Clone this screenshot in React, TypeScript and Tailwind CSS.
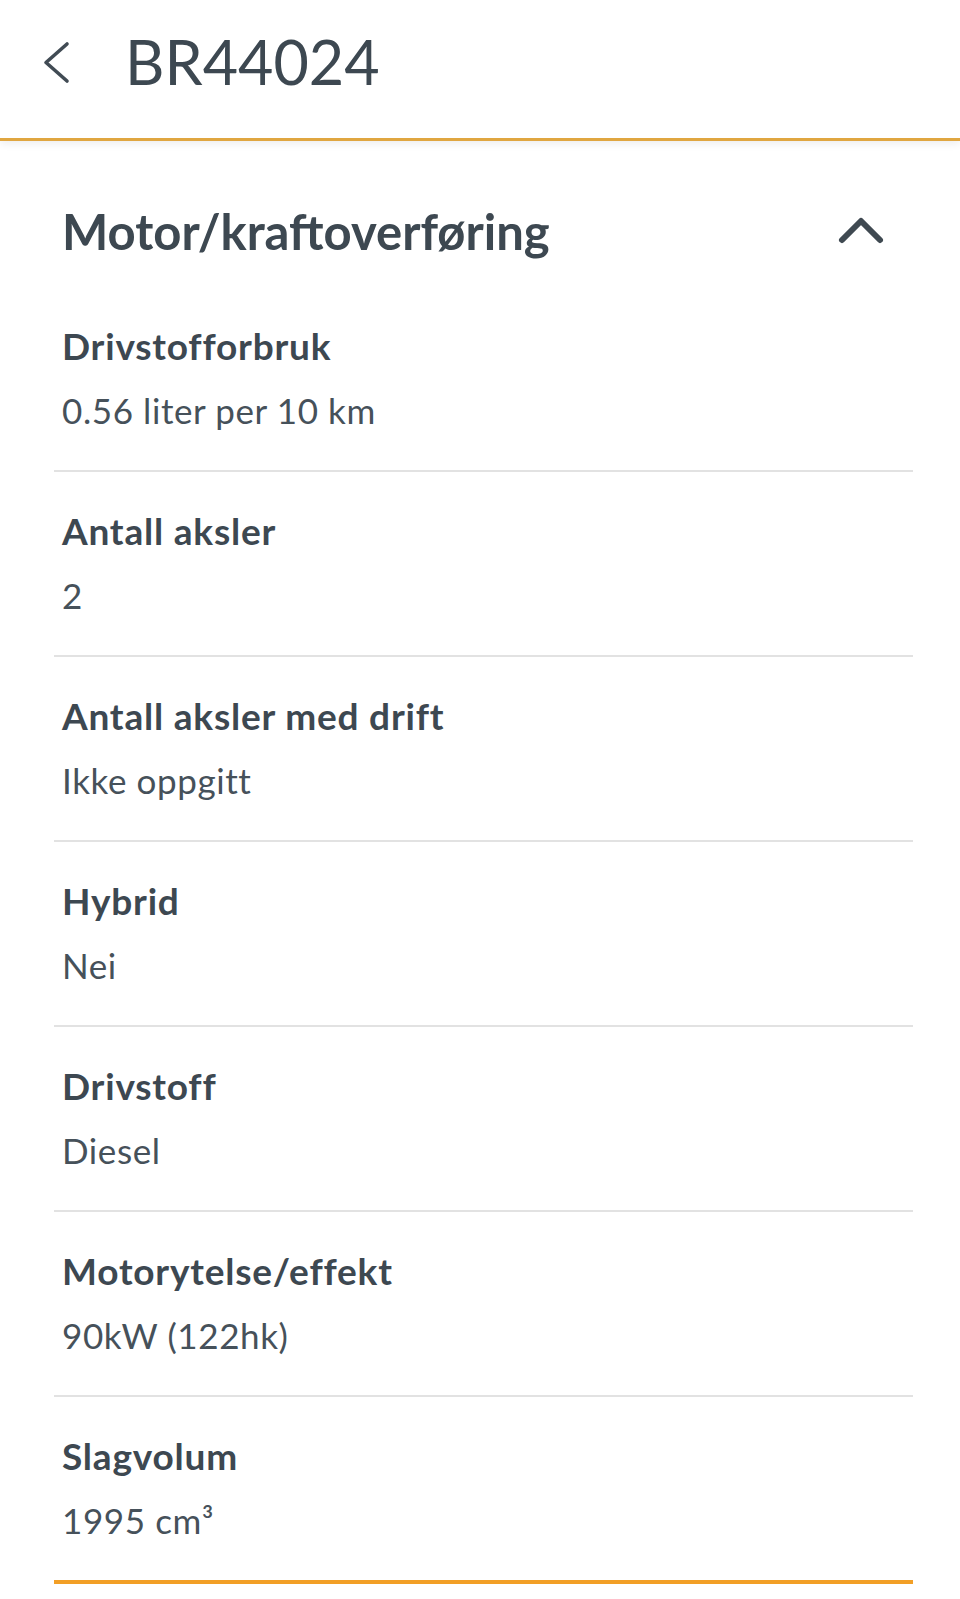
import React from "react";

const rows = [
  { label: "Drivstofforbruk", value: "0.56 liter per 10 km" },
  { label: "Antall aksler", value: "2" },
  { label: "Antall aksler med drift", value: "Ikke oppgitt" },
  { label: "Hybrid", value: "Nei" },
  { label: "Drivstoff", value: "Diesel" },
  { label: "Motorytelse/effekt", value: "90kW (122hk)" },
  { label: "Slagvolum", value: "1995 cm³" },
];

function BackIcon() {
  return (
    <svg width="30" height="44" viewBox="0 0 30 44" fill="none">
      <path d="M25 3 L4 21.5 L25 40" stroke="#414b54" strokeWidth="3.6" strokeLinecap="round" strokeLinejoin="round" />
    </svg>
  );
}

function ChevronUp() {
  return (
    <svg width="48" height="30" viewBox="0 0 48 30" fill="none">
      <path d="M5 24 L24 5 L43 24" stroke="#3f4951" strokeWidth="6" strokeLinecap="round" strokeLinejoin="round" />
    </svg>
  );
}

export default function App() {
  return (
    <div className="min-h-screen bg-white text-[#3d4851]" style={{ fontFamily: "Lato, 'Noto Sans', sans-serif" }}>
      <header className="relative h-[141px] border-b-[3px] border-[#e0a640] bg-white shadow-[0_3px_8px_rgba(0,0,0,0.07)]">
        <div className="flex h-[138px] items-start">
          <div className="ml-[42px] mt-[41px]">
            <BackIcon />
          </div>
          <h1 className="ml-[53px] mt-[25px] text-[61px] font-normal leading-[1.2]">BR44024</h1>
        </div>
      </header>

      <main className="ml-[54px] mr-[47px]">
        <div className="flex items-center justify-between pt-[61px] pl-[8px] pr-[28px]">
          <h2 className="text-[49px] font-bold leading-[1.2]">Motor/kraftoverføring</h2>
          <ChevronUp />
        </div>

        <div className="mt-[63px]">
          {rows.map((r, i) => (
            <div
              key={r.label}
              className={i === 0 ? "px-[8px] pb-[39px]" : "border-t-2 border-[#e2e2e2] px-[8px] pt-[37px] pb-[39px]"}
            >
              <div className="text-[37px] font-bold leading-[44px] tracking-[0.8px]">{r.label}</div>
              <div className="mt-[21px] text-[35px] font-normal leading-[42px] tracking-[0.6px] text-[#46515a]">{r.value}</div>
            </div>
          ))}
          <div className="h-[4px] bg-[#f29f26]" />
        </div>
      </main>
    </div>
  );
}
